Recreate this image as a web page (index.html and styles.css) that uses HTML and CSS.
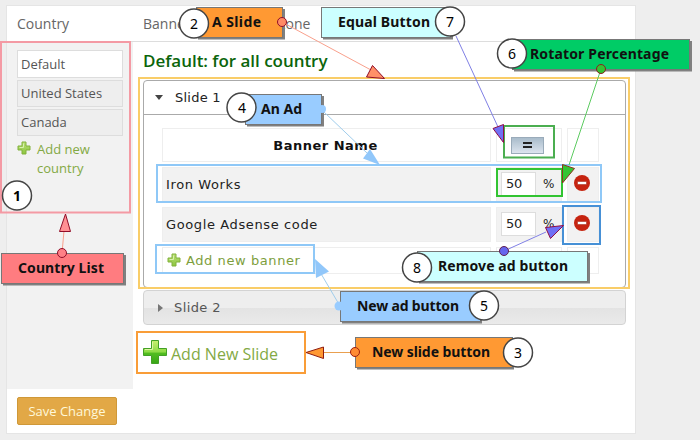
FILE: index.html
```html
<!DOCTYPE html>
<html lang="en">
<head>
<meta charset="utf-8">
<title>Banner rotator</title>
<link rel="stylesheet" href="styles.css">
</head>
<body>
<svg class="defs" width="0" height="0">
  <defs>
    <linearGradient id="lime" x2="0" y2="1"><stop stop-color="#b9df75"/><stop offset="1" stop-color="#8cc63f"/></linearGradient>
    <linearGradient id="green" x2="0" y2="1"><stop stop-color="#c9ef70"/><stop offset=".5" stop-color="#8ddb45"/><stop offset=".55" stop-color="#52bd20"/><stop offset="1" stop-color="#38a516"/></linearGradient>
    <symbol id="plus" viewBox="0 0 14 14"><path d="M5 1h4v4h4v4H9v4H5V9H1V5h4z" fill="url(#lime)" stroke="#82b13d"/><path d="M6.5 2.5v4h-4" fill="none" stroke="#d9f0af"/></symbol>
    <symbol id="minus" viewBox="0 0 16 16"><circle cx="8" cy="8" r="8" fill="#c62410"/><path d="M3.500 6.500h9v3h-9z" fill="#fff" stroke="#a3200f" stroke-width=".5"/></symbol>
  </defs>
</svg>
<main class="panel">
  <header class="panel-head"><span class="head-country">Country</span><span>Banner</span><span class="head-zone">Zone</span></header>
  <div class="panel-body">
    <nav class="sidebar">
      <a class="country active">Default</a>
      <a class="country">United States</a>
      <a class="country">Canada</a>
      <a class="add-country"><svg width="14" height="14"><use href="#plus"/></svg><span>Add new<br>country</span></a>
    </nav>
    <section class="content">
      <h1>Default: for all country</h1>
      <div class="slide">
        <div class="slide-head"><i class="caret down"></i><span>Slide 1</span></div>
        <div class="grid">
          <div class="cell th"><b>Banner Name</b></div><div class="cell eq"><button class="equal"><i></i></button></div><div class="cell"></div>
          <div class="cell fill name">Iron Works</div><div class="cell fill pct"><span class="field">50</span><span>%</span></div><div class="cell fill del"><svg width="16" height="16"><use href="#minus"/></svg></div>
          <div class="cell fill name">Google Adsense code</div><div class="cell fill pct"><span class="field">50</span><span>%</span></div><div class="cell fill del"><svg width="16" height="16"><use href="#minus"/></svg></div>
          <div class="cell add-banner"><svg width="14" height="14"><use href="#plus"/></svg><span>Add new banner</span></div><div class="cell"></div><div class="cell"></div>
        </div>
      </div>
      <div class="slide-closed"><i class="caret right"></i><span>Slide 2</span></div>
      <a class="add-slide"><svg width="24" height="24"><path d="M8.500.5h7v8h8v7h-8v8h-7v-8h-8v-7h8z" fill="url(#green)" stroke="#43a026"/><path d="M9.500 2v7.500H2" fill="none" stroke="#ddf6a4"/></svg><span>Add New Slide</span></a>
    </section>
  </div>
  <footer class="panel-foot"><button class="save">Save Change</button></footer>
</main>

<svg class="notes" width="700" height="440" viewBox="0 0 700 440">
  <g fill="none" stroke-width="2">
    <path stroke="#f49aa4" d="M1 42H130V212.500H1z"/>
    <path stroke="#f9cd68" d="M139 78H629V288H139z"/>
    <path stroke="#f99d38" d="M137 332H305V373H137z"/>
    <path stroke="#8fc8f7" d="M157 165H601V202H157zM156 245H314V273H156z"/>
    <path stroke="#4bae50" d="M504 126H554V157.500H504z"/>
    <path stroke="#32c432" d="M497 169H562V196H497z"/>
    <path stroke="#4690d6" d="M563 206H600V244H563z"/>
  </g>
  <g class="shadow">
    <rect x="3" y="255" width="123" height="30.500"/><rect x="198" y="9" width="87" height="30.500"/><rect x="323" y="9" width="130" height="30.500"/><rect x="514" y="41" width="178" height="30.500"/><rect x="247" y="96" width="77" height="30.500"/><rect x="342" y="293" width="140" height="30.500"/><rect x="357" y="339" width="157" height="30.500"/><rect x="419" y="253" width="171" height="30.500"/>
  </g>
  <g stroke="#777" stroke-width="1">
    <rect x="1.500" y="253.500" width="122" height="30" fill="#ff7c80"/>
    <rect x="196.500" y="7.500" width="86" height="30" fill="#ff9933"/>
    <rect x="321.500" y="7.500" width="129" height="30" fill="#ccffff"/>
    <rect x="512.500" y="39.500" width="177" height="30" fill="#00cc66"/>
    <rect x="245.500" y="94.500" width="76" height="30" fill="#99ccff"/>
    <rect x="340.500" y="291.500" width="140" height="30" fill="#99ccff"/>
    <rect x="355.500" y="337.500" width="157" height="30" fill="#ff9933"/>
    <rect x="417.500" y="251.500" width="170" height="30" fill="#ccffff"/>
  </g>
  <g stroke-width="1">
    <g stroke="#f9a08c"><path d="M282 22L371 70"/><path d="M62 253L64 231"/></g>
    <g stroke="#900d28"><path d="M372.500 65.500L384.500 78.500 366.500 77z" fill="#ff9068"/><path d="M65.500 214L70.500 231.500H59.500z" fill="#ff9094"/><circle cx="282" cy="22" r="4.500" fill="#ff8a65"/><circle cx="62" cy="253" r="4.500" fill="#ff8086"/></g>
    <path d="M456 36L498 127" stroke="#8080e5"/><path d="M503.500 124.500V142.500L493 128.500z" fill="#7070f5" stroke="#900d48"/>
    <path d="M601 69L569 165" stroke="#5bcb60"/><path d="M562.500 164.500L574.500 168.500 562.500 183z" fill="#33c433" stroke="#8b3520"/><circle cx="601" cy="69" r="4.500" fill="#33c433" stroke="#8b2020"/>
    <path d="M504 251L546 232" stroke="#8080e5"/><path d="M545.500 227.500L563.500 225.500 550.500 238.500z" fill="#6f6ff5" stroke="#900d48"/><circle cx="504" cy="251" r="4.500" fill="#6666ee" stroke="#602050"/>
    <path d="M324 112L367 153M340 306L320 272" stroke="#a0cdec" fill="none"/><path d="M370 149L380 165 363 158.500zM315 259L329 271.500 316 278z" fill="#91c7fa"/><circle cx="322" cy="109" r="4" fill="#99ccff"/><circle cx="339" cy="306" r="4.500" fill="#99ccff"/>
    <path d="M324 352.500H355" stroke="#e9a050"/><path d="M306 352.500L323.500 347V358.500z" fill="#ff9833" stroke="#901d10"/><circle cx="355" cy="352" r="4.500" fill="#ff8b33" stroke="#a02010"/>
  </g>
  <g class="label">
    <text x="18" y="273" textLength="86">Country List</text>
    <text x="212" y="27" textLength="49">A Slide</text>
    <text x="338" y="27" textLength="92">Equal Button</text>
    <text x="530" y="59" textLength="139">Rotator Percentage</text>
    <text x="261" y="114" textLength="41">An Ad</text>
    <text x="357" y="311" textLength="102">New ad button</text>
    <text x="372" y="357" textLength="118">New slide button</text>
    <text x="438" y="271" textLength="130">Remove ad button</text>
  </g>
  <g class="ring">
    <circle cx="17" cy="195.500" r="14.500"/><circle cx="194" cy="23.500" r="14.500"/><circle cx="518" cy="352.500" r="14.500"/><circle cx="241.500" cy="107.500" r="14.500"/><circle cx="484" cy="305.500" r="14.500"/><circle cx="512" cy="53.500" r="14.500"/><circle cx="450" cy="21.500" r="14.500"/><circle cx="417" cy="267.500" r="14.500"/>
  </g>
  <g class="num">
    <text class="strong" x="17" y="201">1</text><text x="194" y="29">2</text><text x="518" y="358">3</text><text x="242" y="113">4</text><text x="484" y="311">5</text><text x="512" y="59">6</text><text x="450" y="27">7</text><text x="417" y="273">8</text>
  </g>
</svg>
</body>
</html>
```
FILE: styles.css
```css
* { box-sizing: border-box; }
body { margin: 0; width: 700px; height: 440px; overflow: hidden; background: #eee; padding: 5px 0 0 6px; font: 400 13px "Open Sans", sans-serif; color: #444; position: relative; }
svg { display: block; flex: none; }
.defs { position: absolute; }
.panel { width: 630px; height: 429px; background: #fff; border: 1px solid #e5e5e5; display: flex; flex-direction: column; }
.panel-head { height: 36px; border-bottom: 1px solid #ddd; display: flex; align-items: center; padding: 0 0 0 10px; font-size: 14px; color: #666; flex: none; }
.head-country { width: 126px; }
.head-zone { margin-left: 87px; }
.panel-body { display: flex; height: 347px; flex: none; }
.sidebar { width: 126px; background: #f2f2f2; padding: 8px 10px; display: flex; flex-direction: column; gap: 2px; }
.country { width: 106px; height: 27px; flex: none; border: 1px solid #ddd; background: #eee; padding-left: 3px; line-height: 25px; color: #555; white-space: nowrap; }
.country.active { background: #fff; height: 28px; line-height: 27px; }
.add-country { display: flex; gap: 6px; padding-top: 2px; color: #83a944; line-height: 19px; }
.add-country svg { margin-top: 1px; }
.content { padding: 0 0 0 10px; width: 502px; }
h1 { margin: 0; height: 38px; font: 600 17px/37px "Open Sans", sans-serif; color: #0b650b; letter-spacing: -.03px; white-space: nowrap; }
.slide { width: 483px; height: 208px; border: 1px solid #aaa; border-radius: 4px; font-family: "DejaVu Sans", sans-serif; color: #222; }
.slide-head { height: 34px; border-bottom: 1px solid #aaa; display: flex; align-items: center; padding-left: 11px; gap: 12px; letter-spacing: .25px; }
.caret { width: 0; height: 0; border: 4px solid transparent; }
.caret.down { border-top: 5px solid #444; border-bottom: 0; }
.caret.right { border-left: 5px solid #777; border-right: 0; margin: 0 1px 0 2px; }
.grid { display: grid; grid-template-columns: 329px 66px 32px; grid-template-rows: 34px 35px 35px 27px; column-gap: 5px; row-gap: 5px; padding: 13px 0 0 18px; }
.cell { border: 1px solid #eee; display: flex; align-items: center; min-width: 0; white-space: nowrap; }
.fill { background: #f2f2f2; }
.th { justify-content: center; padding-right: 2px; color: #111; letter-spacing: .5px; }
.name { padding-left: 3px; letter-spacing: .62px; }
.eq { justify-content: center; padding-right: 3px; }
.equal { width: 33px; height: 17px; padding: 0; border: 1px solid #9aabba; background: linear-gradient(#a9bccb, #dce4ee); display: flex; align-items: center; justify-content: center; }
.equal i { width: 9px; height: 6px; border-top: 2px solid #222; border-bottom: 2px solid #222; }
.pct { padding: 0 0 1px 4px; gap: 7px; }
.field { width: 35px; height: 24px; border: 1px solid #ddd; background: #fff; line-height: 22px; padding-left: 4px; letter-spacing: -.3px; }
.pct > span:last-child { font-size: 12px; }
.del { justify-content: center; padding: 0 3px 4px 0; }
.add-banner { padding: 0 0 1px 4px; gap: 5px; color: #7d9e3c; letter-spacing: .58px; }
.slide-closed { margin-top: 2px; width: 483px; height: 35px; border: 1px solid #d3d3d3; border-radius: 4px; background: linear-gradient(#eee 50%, #e3e3e3 52%, #eaeaea); display: flex; align-items: center; padding-left: 12px; gap: 10px; font: 400 13px "DejaVu Sans", sans-serif; letter-spacing: .4px; color: #555; }
.add-slide { display: flex; align-items: center; gap: 4px; margin-top: 15px; height: 24px; font-size: 16px; color: #83a944; }
.add-slide span { padding-top: 4px; }
.panel-foot { padding: 8px 0 0 10px; }
.save { display: block; width: 100px; height: 28px; border: 1px solid #cf9838; border-radius: 2px; background: #e2a846; color: #fff8da; font: 400 13px "Open Sans", sans-serif; padding: 0; white-space: nowrap; }
.notes { position: absolute; left: 0; top: 0; }
.shadow { fill: #808080; }
.label { font: 700 14px "Noto Sans", sans-serif; fill: #111; }
.ring { fill: #fff; stroke: #444; stroke-width: 1.5; }
.num { font: 400 14px "Noto Sans", sans-serif; fill: #000; text-anchor: middle; }
.num .strong { font-weight: 700; }
```
